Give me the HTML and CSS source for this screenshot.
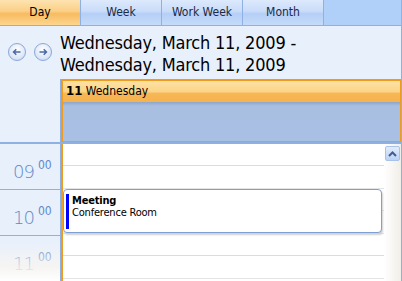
FILE: index.html
```html
<!DOCTYPE html>
<html>
<head>
<meta charset="UTF-8">
<title>Scheduler</title>
<link rel="stylesheet" href="styles.css">
</head>
<body>
<div class="scheduler">
	<div class="tabs">
		<div class="tab active">Day</div>
		<div class="tab">Week</div>
		<div class="tab">Work Week</div>
		<div class="tab">Month</div>
		<div class="tab-fill"></div>
	</div>

	<div class="head">
		<div class="nav">
			<span class="nav-btn">
				<svg width="18" height="18" viewBox="0 0 18 18"><path d="M12.5 9H5.5M8.3 6.2L5.5 9l2.8 2.8" fill="none" stroke="#4a6aa3" stroke-width="1.5"/></svg>
			</span>
			<span class="nav-btn">
				<svg width="18" height="18" viewBox="0 0 18 18"><path d="M5.5 9h7M9.7 6.2L12.5 9l-2.8 2.8" fill="none" stroke="#4a6aa3" stroke-width="1.5"/></svg>
			</span>
		</div>
		<div class="title">Wednesday, March 11, 2009 -<br>Wednesday, March 11, 2009</div>
	</div>

	<div class="allday">
		<div class="side"></div>
		<div class="day-box">
			<div class="day-head"><b>11</b> Wednesday</div>
			<div class="day-band"></div>
		</div>
	</div>

	<div class="grid">
		<div class="times">
			<div class="hour"><span class="hh">09</span><span class="mm">00</span></div>
			<div class="hour"><span class="hh">10</span><span class="mm">00</span></div>
			<div class="hour"><span class="hh">11</span><span class="mm">00</span></div>
			<div class="fade"></div>
		</div>
		<div class="slots">
			<div class="slot"></div>
			<div class="slot half"></div>
			<div class="slot"></div>
			<div class="slot half"></div>
			<div class="slot"></div>
			<div class="slot half"></div>
			<div class="appt">
				<div class="appt-bar"></div>
				<div class="appt-text"><b>Meeting</b><br>Conference Room</div>
			</div>
		</div>
		<div class="scroll">
			<div class="scroll-up">
				<svg width="9" height="6" viewBox="0 0 9 6"><path d="M1 5l3.5-3.5L8 5" fill="none" stroke="#3f5f93" stroke-width="2"/></svg>
			</div>
		</div>
	</div>
</div>
</body>
</html>
```

FILE: styles.css
```css
*{
	box-sizing: border-box;
}
body{
	margin: 0;
	font-family: "DejaVu Sans Condensed", "DejaVu Sans", sans-serif;
	background-color: #ffffff;
}
.scheduler{
	width: 402px;
	height: 281px;
	overflow: hidden;
	background-color: #e8f0fc;
	border-right: 1px solid #8fb0e3;
}

/* tabs */
.tabs{
	display: flex;
	height: 26px;
	border-bottom: 1px solid #8fb0e3;
}
.tab{
	width: 81px;
	border-right: 1px solid #8fb0e3;
	font-size: 12px;
	color: #1c2a44;
	text-align: center;
	line-height: 25px;
	background: linear-gradient(#dde9fc, #c9dcf9 45%, #b4cff6 55%, #c6dbf9);
}
.tab.active{
	color: #000;
	background: linear-gradient(#fde3b0, #fbcf86 45%, #f8bb5f 55%, #fcd690);
}
.tab-fill{
	flex: 1;
	background-color: #b0cff9;
}

/* header */
.head{
	display: flex;
	height: 53px;
}
.nav{
	display: flex;
	gap: 8px;
	width: 60px;
	padding: 17px 0 0 8px;
}
.nav-btn{
	width: 18px;
	height: 18px;
	border-radius: 50%;
	border: 1px solid #8ba7d6;
	background: radial-gradient(circle at 50% 35%, #ffffff, #dbe6f8 65%, #c0d3f1);
}
.nav-btn svg{
	display: block;
	margin: -1px;
}
.title{
	font-size: 18px;
	letter-spacing: -0.2px;
	line-height: 22px;
	color: #000;
	padding-top: 6px;
}

/* all day */
.allday{
	display: flex;
	height: 65px;
	border-bottom: 2px solid #8fb0e3;
}
.side{
	width: 61px;
	border-right: 1px solid #8fb0e3;
}
.day-box{
	flex: 1;
	border: 2px solid #f29a1c;
	border-bottom-width: 3px;
	border-right-width: 1px;
}
.day-head{
	height: 21px;
	font-size: 12px;
	line-height: 20px;
	padding-left: 3px;
	color: #000;
	background: linear-gradient(#fde2a6, #fbd487 50%, #f7b755 60%, #f6b24d);
}
.day-head b{
	font-size: 13px;
}
.day-band{
	height: 39px;
	background: linear-gradient(#8fa6cc, #a8bfe2 4px, #a8c0e4);
}

/* grid */
.grid{
	display: flex;
	height: 137px;
}
.times{
	position: relative;
	width: 61px;
	border-right: 1px solid #8fb0e3;
	background-color: #e8f0fc;
}
.fade{
	position: absolute;
	left: 0;
	right: 0;
	bottom: 0;
	height: 40px;
	background: linear-gradient(rgba(255, 255, 255, 0), rgba(250, 246, 240, 0.75) 65%, #ffffff);
}
.hour{
	height: 46px;
	border-bottom: 1px solid #8fb0e3;
	color: #6189c8;
	padding: 14px 0 0 13px;
	white-space: nowrap;
}
.hh{
	font-size: 18px;
	font-weight: 200;
	font-family: "DejaVu Sans", sans-serif;
	letter-spacing: -1px;
}
.mm{
	font-size: 12px;
	vertical-align: 9px;
	margin-left: 4px;
}
.slots{
	position: relative;
	width: 323px;
	background-color: #fff;
	border-left: 2px solid #f29a1c;
}
.slot{
	height: 22px;
	border-bottom: 1px solid #dcdcdc;
}
.slot.half{
	height: 23px;
	border-bottom-color: #e4e4e4;
}
.appt{
	position: absolute;
	left: 0;
	top: 45px;
	width: 319px;
	height: 44px;
	display: flex;
	gap: 3px;
	padding: 4px 0 0 2px;
	background-color: #fff;
	border: 1px solid #7e9fd3;
	border-radius: 4px;
	box-shadow: 1px 2px 2px #d0d0d0;
}
.appt-bar{
	width: 3px;
	height: 35px;
	background-color: #0000ff;
}
.appt-text{
	font-size: 11px;
	letter-spacing: -0.2px;
	line-height: 12px;
	color: #000;
	padding-top: 1px;
}
.scroll{
	flex: 1;
	background: linear-gradient(90deg, #ffffff, #f1eee7);
	padding: 2px 1px 0 1px;
}
.scroll-up{
	height: 15px;
	border: 1px solid #a9c2ea;
	border-radius: 2px;
	background: linear-gradient(#e3ecfc, #bcd2f6);
	display: flex;
	align-items: center;
	justify-content: center;
}
```
